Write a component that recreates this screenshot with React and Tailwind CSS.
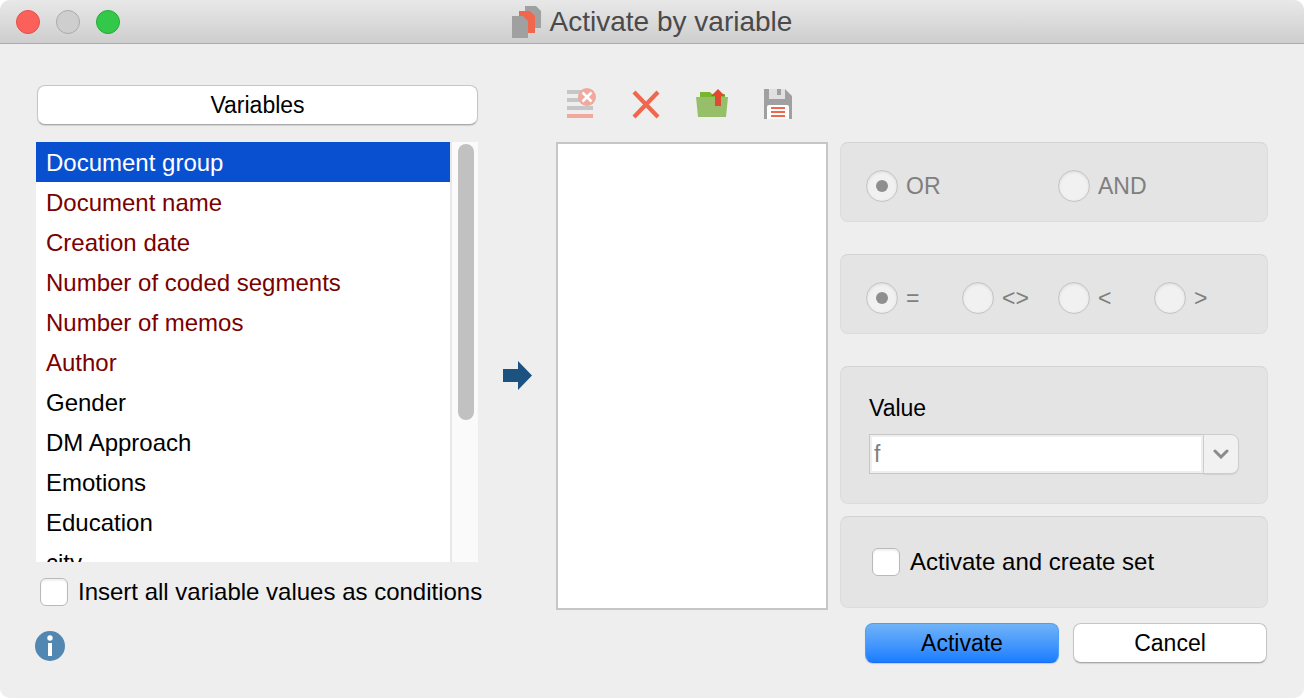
import { useState } from 'react';

const variables = [
  { name: 'Document group', system: true },
  { name: 'Document name', system: true },
  { name: 'Creation date', system: true },
  { name: 'Number of coded segments', system: true },
  { name: 'Number of memos', system: true },
  { name: 'Author', system: true },
  { name: 'Gender' },
  { name: 'DM Approach' },
  { name: 'Emotions' },
  { name: 'Education' },
  { name: 'city' },
];

const operators = ['=', '<>', '<', '>'];

const LogoIcon = () => (
  <svg viewBox="0 0 30 32" className="h-8 w-[30px]">
    <path d="M13 0h11l5 5v17H13z" fill="#a0a0a0" />
    <path d="M7 5h11l5 5v17H7z" fill="#f1674e" />
    <path d="M0 10h11l5 5v17H0z" fill="#a0a0a0" />
  </svg>
);

const ClearAllIcon = () => (
  <svg viewBox="0 0 32 32" className="size-8">
    <path d="M2 2h26v4H2zM2 10h26v4H2zM2 18h26v4H2z" fill="#c6c6c6" />
    <path d="M2 26h26v4H2z" fill="#f1a89d" />
    <circle cx="22" cy="9" r="9" fill="#f1a89d" />
    <path d="M17.5 4.5l9 9M26.5 4.5l-9 9" stroke="#fff" strokeWidth="2.6" />
  </svg>
);

const RemoveIcon = () => (
  <svg viewBox="0 0 32 32" className="size-8">
    <path d="M3 4l24 25M27 4L3 29" stroke="#f1674e" strokeWidth="4.2" />
  </svg>
);

const OpenIcon = () => (
  <svg viewBox="0 0 32 32" className="size-8 overflow-visible">
    <path d="M3 4h10l2 2h13v6H3z" fill="#76b82a" />
    <path d="M-1 9h32l-2 20H1z" fill="#97bf69" />
    <path d="M21 1l7 7h-4v10h-6V8h-4z" fill="#e04a33" />
  </svg>
);

const SaveIcon = () => (
  <svg viewBox="0 0 32 32" className="size-8">
    <path d="M1 1h21l7 7v23H1z" fill="#a0a0a0" />
    <path d="M6 1h16v10H6z" fill="#e0e0e0" />
    <path d="M14 1h4v6h-4z" fill="#a0a0a0" />
    <path d="M4 31V19q0-2 2-2h18q2 0 2 2v12z" fill="#fff" />
    <path d="M8 19h14v2H8zM8 23h14v2H8zM8 27h14v2H8z" fill="#f1674e" />
  </svg>
);

const Panel = ({ className, children }) => (
  <div className={`rounded-lg border border-[#dcdcdc] border-t-[#d3d3d3] bg-[#e4e4e4] ${className}`}>{children}</div>
);

const Radio = ({ name, label, checked }) => (
  <label className="flex items-center gap-2 text-[#7f7f7f]">
    <input
      type="radio"
      name={name}
      defaultChecked={checked}
      disabled
      className="grid size-8 shrink-0 appearance-none place-items-center rounded-full border border-[#c3c3c3] bg-[#f1f1f1] shadow-[inset_0_1px_3px_rgba(0,0,0,0.1)] before:size-3 before:rounded-full checked:before:bg-[#8f8f8f]"
    />
    {label}
  </label>
);

const Checkbox = ({ label }) => (
  <label className="flex items-center gap-[10px] text-[24px]">
    <input
      type="checkbox"
      className="grid size-7 shrink-0 appearance-none place-items-center rounded-md border border-[#b9b9b9] bg-white shadow-[inset_0_2px_2px_rgba(0,0,0,0.06)] before:text-[20px] before:leading-none checked:before:content-['✓']"
    />
    <span className="whitespace-nowrap">{label}</span>
  </label>
);

const App = () => {
  const [selected, setSelected] = useState('Document group');
  const [value, setValue] = useState('f');

  return (
    <div className="min-h-screen bg-white font-['Liberation_Sans',Arial,sans-serif] text-[23px] leading-7 text-black">
      <div className="flex min-h-screen flex-col overflow-hidden rounded-[10px] bg-[#eeeeee]">
        <header className="grid h-11 grid-cols-[1fr_auto_1fr] items-center border-b border-[#acacac] bg-linear-to-b from-[#e8e8e8] to-[#cecece] px-4">
          <div className="flex gap-4">
            <button aria-label="Close" className="size-6 rounded-full border border-[#e2504b] bg-[#fc605b]" />
            <button aria-label="Minimize" className="size-6 rounded-full border border-[#ababab] bg-[#cecece]" />
            <button aria-label="Zoom" className="size-6 rounded-full border border-[#26a934] bg-[#34c84a]" />
          </div>
          <h1 className="flex items-center gap-2 text-[28px] text-[#4a4a4a]"><LogoIcon />Activate by variable</h1>
        </header>

        <main className="grid grow grid-cols-[442fr_78px_272fr_12px_428fr] px-9 pt-[41px] pb-[35px]">
          <section className="flex min-w-0 flex-col">
            <button className="ml-px h-10 rounded-lg border border-[#c6c6c6] border-b-[#a9a9a9] bg-white shadow-[0_1px_1px_rgba(0,0,0,0.12)]">Variables</button>
            <div className="mt-[17px] flex h-[420px]">
              <ul role="listbox" aria-label="Variables" className="grow overflow-hidden bg-white">
                {variables.map(v => (
                  <li
                    key={v.name}
                    role="option"
                    aria-selected={selected === v.name}
                    onClick={() => setSelected(v.name)}
                    className={`h-10 px-[10px] text-[24px] leading-[42px] ${selected === v.name ? 'bg-[#0950d0] text-white' : v.system ? 'text-[#7b0000]' : ''}`}
                  >
                    {v.name}
                  </li>
                ))}
              </ul>
              <div className="w-7 border-l-2 border-[#e7e7e7] bg-[#fafafa] pt-[2px] pl-[6px]">
                <div className="h-[276px] w-4 rounded-full bg-[#c1c1c1]" />
              </div>
            </div>
            <div className="mt-4 ml-1"><Checkbox label="Insert all variable values as conditions" /></div>
            <button aria-label="Info" className="mt-[25px] -ml-px size-[30px]">
              <svg viewBox="0 0 30 30" className="size-[30px]">
                <circle cx="15" cy="15" r="15" fill="#5187b1" />
                <circle cx="15" cy="7" r="2.7" fill="#fff" />
                <path d="M13 12h4v13h-4z" fill="#fff" />
              </svg>
            </button>
          </section>

          <div className="flex justify-center pt-[276px]">
            <button aria-label="Add variable" className="h-[30px] w-[30px]">
              <svg viewBox="0 0 30 30" className="size-[30px]">
                <path d="M1 8h15V0l14 14.5L16 29v-8H1z" fill="#1b527f" />
              </svg>
            </button>
          </div>

          <section className="flex min-w-0 flex-col">
            <div className="flex gap-[34px] pt-[3px] pl-[9px]">
              <button aria-label="Remove all" disabled><ClearAllIcon /></button>
              <button aria-label="Remove"><RemoveIcon /></button>
              <button aria-label="Open"><OpenIcon /></button>
              <button aria-label="Save"><SaveIcon /></button>
            </div>
            <div role="listbox" aria-label="Conditions" className="mt-[22px] h-[468px] border-2 border-[#c6c6c6] bg-white" />
          </section>

          <section className="col-start-5 flex min-w-0 flex-col pt-[57px]">
            <Panel className="flex h-20 items-center pt-2 pr-[17px] pl-[25px]">
              <div className="grid grow grid-cols-2">
                <Radio name="logic" label="OR" checked />
                <Radio name="logic" label="AND" />
              </div>
            </Panel>
            <Panel className="mt-8 flex h-20 items-center pt-2 pr-[17px] pl-[25px]">
              <div className="grid grow grid-cols-4">
                {operators.map(op => <Radio key={op} name="operator" label={op} checked={op === '='} />)}
              </div>
            </Panel>
            <Panel className="mt-8 h-[138px] px-7 pt-[27px]">
              <label htmlFor="value" className="block">Value</label>
              <div className="mt-3 flex h-10">
                <input
                  id="value"
                  value={value}
                  onChange={e => setValue(e.target.value)}
                  className="min-w-0 grow border border-r-0 border-[#c6c6c6] bg-white px-1 text-[#7f7f7f] shadow-[inset_0_0_0_2px_#efefef] outline-none"
                />
                <button aria-label="Show values" className="flex w-9 items-center justify-center rounded-r-lg border border-[#cdcdcd] bg-[#f1f1f1] shadow-[0_1px_1px_rgba(0,0,0,0.08)]">
                  <svg viewBox="0 0 16 10" className="h-[10px] w-4">
                    <path d="M2 2l6 6 6-6" fill="none" stroke="#8b8b8b" strokeWidth="3" strokeLinecap="round" />
                  </svg>
                </button>
              </div>
            </Panel>
            <Panel className="mt-3 flex h-[92px] items-center pl-[31px]">
              <Checkbox label="Activate and create set" />
            </Panel>
            <div className="mt-[15px] grid grid-cols-2 gap-[14px] pr-px pl-[25px]">
              <button className="h-10 rounded-lg border border-[#4c9ff2] border-b-[#1a6bf5] bg-linear-to-b from-[#6fb3f8] to-[#167dff] shadow-[0_1px_1px_rgba(0,0,0,0.15)]">Activate</button>
              <button className="h-10 rounded-lg border border-[#c6c6c6] border-b-[#a9a9a9] bg-white shadow-[0_1px_1px_rgba(0,0,0,0.12)]">Cancel</button>
            </div>
          </section>
        </main>
      </div>
    </div>
  );
};
export default App;
